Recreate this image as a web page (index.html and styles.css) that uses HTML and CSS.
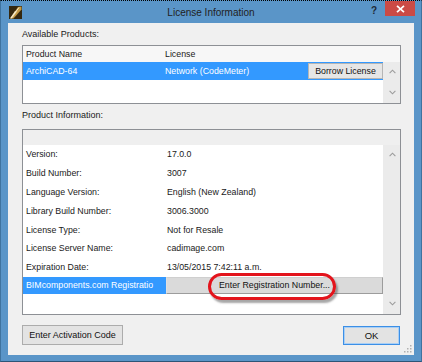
FILE: index.html
```html
<!DOCTYPE html>
<html>
<head>
<meta charset="utf-8">
<link rel="stylesheet" href="styles.css">
</head>
<body>
<div class="window">
  <div class="titlebar">
    <div class="tb-left">
      <svg class="app-icon" width="13" height="13" viewBox="0 0 13 13">
        <rect x="0" y="0" width="13" height="13" fill="#35280f"/>
        <polygon points="1,12.5 9,1 12.5,0.5 12.5,3.5 4.5,12.5" fill="#c39a45"/>
        <polygon points="1,12.5 6,5 8,5.5 3,12.5" fill="#e6d3a0"/>
        <line x1="2" y1="12" x2="10" y2="1.5" stroke="#fbf3dc" stroke-width="0.9"/>
      </svg>
    </div>
    <div class="tb-title">License Information</div>
    <div class="tb-right">
      <span class="help">?</span>
      <div class="close">
        <svg width="9" height="8" viewBox="0 0 9 8">
          <line x1="1" y1="0.8" x2="8" y2="7.2" stroke="#fff" stroke-width="1.7"/>
          <line x1="8" y1="0.8" x2="1" y2="7.2" stroke="#fff" stroke-width="1.7"/>
        </svg>
      </div>
    </div>
  </div>

  <div class="client">
    <div class="group-label">Available Products:</div>
    <div class="box products">
      <div class="header row-grid">
        <div class="cell c1">Product Name</div>
        <div class="cell c2">License</div>
      </div>
      <div class="body">
        <div class="main">
          <div class="sel-row">
            <div class="cell c1 sel">ArchiCAD-64</div>
            <div class="cell c2 sel">Network (CodeMeter)</div>
            <div class="btn borrow">Borrow License</div>
          </div>
        </div>
        <div class="scrollbar">
          <svg width="7" height="5" viewBox="0 0 7 5"><polyline points="0.6,4.2 3.5,1.2 6.4,4.2" fill="none" stroke="#9c9c9c" stroke-width="1.1"/></svg>
          <svg width="7" height="5" viewBox="0 0 7 5"><polyline points="0.6,0.8 3.5,3.8 6.4,0.8" fill="none" stroke="#9c9c9c" stroke-width="1.1"/></svg>
        </div>
      </div>
    </div>

    <div class="group-label second">Product Information:</div>
    <div class="box info">
      <div class="header short"></div>
      <div class="body">
        <div class="main">
          <div class="info-row"><div class="cell c1">Version:</div><div class="cell c2">17.0.0</div></div>
          <div class="info-row"><div class="cell c1">Build Number:</div><div class="cell c2">3007</div></div>
          <div class="info-row"><div class="cell c1">Language Version:</div><div class="cell c2">English (New Zealand)</div></div>
          <div class="info-row"><div class="cell c1">Library Build Number:</div><div class="cell c2">3006.3000</div></div>
          <div class="info-row"><div class="cell c1">License Type:</div><div class="cell c2">Not for Resale</div></div>
          <div class="info-row"><div class="cell c1">License Server Name:</div><div class="cell c2">cadimage.com</div></div>
          <div class="info-row"><div class="cell c1">Expiration Date:</div><div class="cell c2">13/05/2015 7:42:11 a.m.</div></div>
          <div class="info-row last">
            <div class="cell c1 sel clip">BIMcomponents.com Registratio</div>
            <div class="btn reg">Enter Registration Number...<span class="oval"></span></div>
          </div>
        </div>
        <div class="scrollbar">
          <svg width="7" height="5" viewBox="0 0 7 5"><polyline points="0.6,4.2 3.5,1.2 6.4,4.2" fill="none" stroke="#9c9c9c" stroke-width="1.1"/></svg>
          <svg width="7" height="5" viewBox="0 0 7 5"><polyline points="0.6,0.8 3.5,3.8 6.4,0.8" fill="none" stroke="#9c9c9c" stroke-width="1.1"/></svg>
        </div>
      </div>
    </div>

    <div class="buttons">
      <div class="btn bottom activation">Enter Activation Code</div>
      <div class="btn bottom ok">OK</div>
    </div>

    <svg class="grip" width="8" height="8" viewBox="0 0 8 8">
      <rect x="6" y="0" width="1.5" height="1.5" fill="#b0b0b0"/>
      <rect x="3" y="3" width="1.5" height="1.5" fill="#b0b0b0"/>
      <rect x="6" y="3" width="1.5" height="1.5" fill="#b0b0b0"/>
      <rect x="0" y="6" width="1.5" height="1.5" fill="#b0b0b0"/>
      <rect x="3" y="6" width="1.5" height="1.5" fill="#b0b0b0"/>
      <rect x="6" y="6" width="1.5" height="1.5" fill="#b0b0b0"/>
    </svg>
  </div>
</div>
</body>
</html>
```
FILE: styles.css
```css
html, body {
  margin: 0;
  padding: 0;
}
body {
  width: 422px;
  height: 362px;
  overflow: hidden;
  font-family: "Liberation Sans", Arial, sans-serif;
  color: #1a1a1a;
}
.window {
  width: 422px;
  height: 362px;
  box-sizing: border-box;
  background: #5a95c8;
  border-top: 1px dotted #000;
  border-left: 1px solid #3f739f;
  border-right: 1px solid #3f739f;
  border-bottom: 1px solid #2d5577;
  display: flex;
  flex-direction: column;
}
.titlebar {
  height: 22px;
  display: grid;
  grid-template-columns: 1fr auto 1fr;
  flex: none;
}
.tb-left {
  display: flex;
  align-items: flex-start;
}
.app-icon {
  margin-left: 8px;
  margin-top: 5px;
  display: block;
}
.tb-title {
  font-size: 10px;
  line-height: 22px;
  padding-top: 1px;
  color: #222;
}
.tb-right {
  display: flex;
  justify-content: flex-end;
  align-items: flex-start;
}
.help {
  font-size: 10px;
  font-weight: bold;
  color: #1e2a36;
  line-height: 14px;
  margin-top: 3px;
  margin-right: 8px;
}
.close {
  width: 30px;
  height: 15px;
  background: #cb4a45;
  margin-right: 6px;
  display: flex;
  align-items: center;
  justify-content: center;
}
.close svg { display: block; }

.client {
  flex: 1;
  margin: 0 7px 6px 7px;
  background: #f0f0f0;
  padding: 0 13px 0 14px;
  position: relative;
}
.group-label {
  font-size: 9px;
  line-height: 14px;
  margin-top: 4px;
  color: #1a1a1a;
}
.group-label.second {
  margin-top: 4px;
}
.box {
  border: 1px solid #8d9095;
  background: #fff;
  display: flex;
  flex-direction: column;
  margin-top: 4px;
  box-sizing: border-box;
}
.products { height: 59px; }
.info { height: 186px; margin-top: 7px; }

.header {
  height: 16px;
  background: #f7f7f7;
  flex: none;
}
.header.short {
  height: 15px;
  background: #efefef;
}
.row-grid {
  display: grid;
  grid-template-columns: 141px 1fr;
  align-items: center;
}
.body {
  flex: 1;
  display: flex;
}
.main {
  flex: 1;
  background: #fff;
}
.scrollbar {
  width: 17px;
  background: #ebebeb;
  display: flex;
  flex-direction: column;
  justify-content: space-between;
  align-items: center;
  padding: 7px 0 8px 1px;
  box-sizing: border-box;
}
.scrollbar svg { display: block; }

.cell {
  font-size: 8.8px;
  line-height: 16px;
  white-space: nowrap;
}
.c1 { padding-left: 3px; }
.c2 { padding-left: 1px; }

.sel-row {
  height: 18px;
  display: grid;
  grid-template-columns: 141px 1fr 75px;
  background: #3399ff;
  align-items: center;
}
.sel {
  color: #fff;
  background: #3399ff;
}
.btn {
  font-size: 8.8px;
  box-sizing: border-box;
  display: flex;
  align-items: center;
  justify-content: center;
  white-space: nowrap;
  color: #111;
}
.borrow {
  height: 16px;
  background: #e6e6e6;
  border: 1px solid #b5b5b5;
}

.info-row {
  height: 18.8px;
  display: grid;
  grid-template-columns: 143px 1fr;
  align-items: center;
}
.info-row .cell { line-height: 18px; }
.info-row .c2 { padding-left: 1px; }
.info-row.last {
  align-items: stretch;
  padding-top: 0.4px;
}
.info-row.last .c1 {
  height: 17px;
  line-height: 17px;
  padding-left: 3px;
}
.clip {
  overflow: hidden;
  text-overflow: clip;
  padding-right: 2px;
}
.reg {
  height: 17px;
  background: #dadada;
  border: 1px solid #9c9c9c;
  border-left-color: #e0e0e0;
  border-top-color: #cfcfcf;
  position: relative;
}
.oval {
  position: absolute;
  left: 41px;
  top: -5px;
  width: 128px;
  height: 27px;
  box-sizing: border-box;
  border: 3px solid #e3141c;
  border-radius: 14px;
  box-shadow: 2px 3px 2px rgba(60, 60, 60, 0.45);
}

.buttons {
  margin-top: 10px;
  display: flex;
  justify-content: space-between;
  align-items: flex-start;
  padding-right: 1px;
}
.bottom {
  height: 20px;
  font-size: 9px;
  background: #e3e3e3;
  border: 1px solid #acacac;
}
.activation { width: 101px; }
.ok {
  width: 57px;
  margin-top: 1px;
  height: 19px;
  border: 1px solid #3c8fe6;
  box-shadow: inset 0 0 0 1px #a9cff5;
  font-size: 9.5px;
}
.grip {
  position: absolute;
  right: 2px;
  bottom: 2px;
  display: block;
}
```
